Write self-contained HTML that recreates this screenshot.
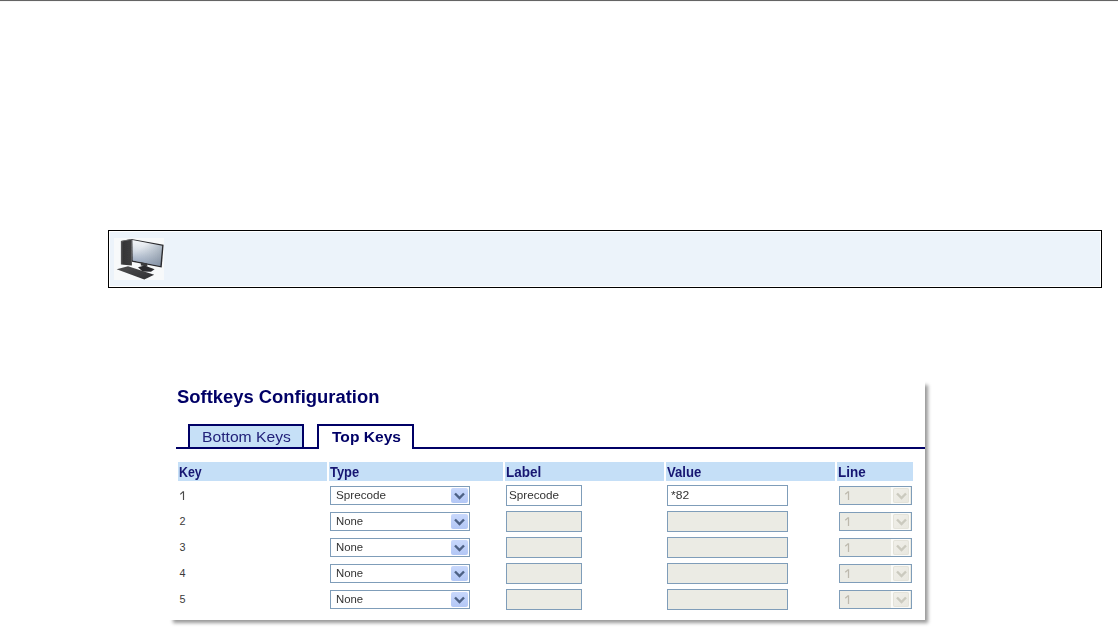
<!DOCTYPE html>
<html><head><meta charset="utf-8">
<style>
*{margin:0;padding:0;box-sizing:border-box}
html,body{width:1118px;height:627px;overflow:hidden;background:#fff;font-family:"Liberation Sans",sans-serif}
.a{position:absolute}
.t{white-space:nowrap;line-height:1;transform-origin:0 0}
#topbar{left:0;top:0;width:1118px;height:1px;background:#646464}
#topbar2{left:0;top:1px;width:1118px;height:1px;background:#f6f6f6}
#topbar3{display:none}
#note{left:108px;top:230px;width:994px;height:58px;border:1px solid #000;background:#ecf3fa;box-shadow:inset 0 0 0 1px #fff}
#panel{left:168px;top:380px;width:757px;height:240px;background:#fff;box-shadow:4px 4px 3.5px -1px rgba(0,0,0,.4)}
.h1{font-weight:bold;color:#000066}
#tabline{left:176px;top:447px;width:749px;height:2px;background:#000066}
.tab{top:424px;height:25px;border:2px solid #000066;border-bottom:none}
#tab1{left:188px;width:116px;background:#c6e0f7}
#tab2{left:317px;width:97px;background:#fff;height:25px}
.tab1t{color:#22227a}
.tab2t{font-weight:bold;color:#000066}
.hd{top:462px;height:19px;background:#c5dff7}
.ht{font-weight:bold;color:#161672}
.num{color:#3a3a3a}
.sel{width:140px;height:19px;border:1px solid #7f9db9;background:#fff}
.btn{width:17px;height:15px;border-radius:2px;background:linear-gradient(#c8d8fc,#b3c7f5)}
.inp{height:21px;border:1px solid #7f9db9;background:#fff}
.dis{background:#ebebe4}
.txt{color:#333}
.lsel{width:73px;height:19px;border:1px solid #7f9db9;background:#ebebe4}
.lgap{width:19px;height:17px;background:#fbfbf8}
.lbtn{width:16px;height:15px;border-radius:2px;background:linear-gradient(135deg,#f1f0ea,#e8e7df);box-shadow:inset 0 0 0 1px #e4e3da}
.lt{color:#aca899}

</style></head><body>
<div class="a" id="topbar"></div><div class="a" id="topbar2"></div><div class="a" id="topbar3"></div>
<div class="a" id="note"></div>
<svg class="a" style="left:114px;top:238px" width="50" height="42" viewBox="0 0 50 42">
  <defs>
    <linearGradient id="scr" x1="0" y1="0" x2="0.9" y2="1"><stop offset="0" stop-color="#fbfcfd"/><stop offset=".3" stop-color="#e9edf1"/><stop offset=".55" stop-color="#b9c3ce"/><stop offset="1" stop-color="#6f7d8e"/></linearGradient>
    <linearGradient id="scr2" x1="0" y1="1" x2="0.6" y2="0"><stop offset="0" stop-color="#7d8fb0" stop-opacity=".85"/><stop offset=".45" stop-color="#a7b5cb" stop-opacity=".35"/><stop offset="1" stop-color="#ffffff" stop-opacity="0"/></linearGradient>
    <linearGradient id="tw" x1="0" y1="0" x2="1" y2="0"><stop offset="0" stop-color="#5a5a5c"/><stop offset=".2" stop-color="#353537"/><stop offset="1" stop-color="#3e3e40"/></linearGradient>
    <linearGradient id="kb" x1="0" y1="0" x2="1" y2="1"><stop offset="0" stop-color="#505052"/><stop offset="1" stop-color="#2e2e30"/></linearGradient>
    <filter id="bl" x="-5%" y="-5%" width="110%" height="110%"><feGaussianBlur stdDeviation="0.5"/></filter>
  </defs>
  <rect x="0" y="0" width="50" height="42" fill="#f7f9fa"/>
  <g filter="url(#bl)">
  <polygon points="6.9,3.0 17.4,1.1 17.9,27.5 6.9,26.4" fill="url(#tw)"/>
  <polygon points="6.9,3.0 17.4,1.1 18.6,1.6 8.2,3.5" fill="#707072"/>
  <polygon points="17.4,1.0 49.6,6.7 47.7,29.5 17.9,23.7" fill="#2a2a2d"/>
  <polygon points="18.4,2.1 48.2,7.7 46.3,28.0 18.8,22.4" fill="url(#scr)"/>
  <polygon points="18.4,2.1 48.2,7.7 46.3,28.0 18.8,22.4" fill="url(#scr2)"/>
  <polygon points="26.8,24.2 33.2,25.5 33.4,28.6 26.8,27.6" fill="#3a3a3c"/>
  <polygon points="24,29.2 30.5,27.6 40.6,31.2 37,33.8 28.5,33.4" fill="#2c2c2e"/>
  <polygon points="2.6,31.2 14,28.2 40.2,36.8 30.3,41.6" fill="url(#kb)"/>
  </g>
</svg>

<div class="a" id="panel"></div>
<div class="a t h1" style="left:176.5px;top:387.0px;font-size:19.2px;transform:scaleX(0.959)">Softkeys Configuration</div>
<div class="a tab" id="tab1"></div>
<div class="a" id="tabline"></div>
<div class="a tab" id="tab2"></div>
<div class="a t tab1t" style="left:201.7px;top:429.0px;font-size:15.4px;transform:scaleX(1.019)">Bottom Keys</div>
<div class="a t tab2t" style="left:331.6px;top:429.0px;font-size:15.4px;transform:scaleX(1.013)">Top Keys</div>
<div class="a hd" style="left:178px;width:149px"></div>
<div class="a hd" style="left:329px;width:174px"></div>
<div class="a hd" style="left:505px;width:159px"></div>
<div class="a hd" style="left:666px;width:169px"></div>
<div class="a hd" style="left:837px;width:76px"></div>
<div class="a t ht" style="left:178.9px;top:465.9px;font-size:13.8px;transform:scaleX(0.9)">Key</div>
<div class="a t ht" style="left:330.4px;top:465.9px;font-size:13.8px;transform:scaleX(0.935)">Type</div>
<div class="a t ht" style="left:505.8px;top:465.9px;font-size:13.8px;transform:scaleX(0.979)">Label</div>
<div class="a t ht" style="left:667.2px;top:465.9px;font-size:13.8px;transform:scaleX(0.953)">Value</div>
<div class="a t ht" style="left:838.0px;top:465.9px;font-size:13.8px;transform:scaleX(0.974)">Line</div>
<svg class="a" style="left:178px;top:489px" width="8" height="13"><path d="M5.5,2.3 V11 M2.3,5.3 L5.2,2.6" fill="none" stroke="#4a4a4a" stroke-width="1.15"/></svg>
<div class="a sel" style="left:330px;top:486px"></div>
<div class="a t txt" style="left:335.6px;top:490.0px;font-size:10.8px;transform:scaleX(1.083)">Sprecode</div>
<div class="a btn" style="left:451px;top:488px"></div>
<svg class="a" style="left:451px;top:488px" width="17" height="15"><polyline points="4,5.5 8.5,10 13,5.5" fill="none" stroke="#4d6185" stroke-width="2.4"/></svg>
<div class="a inp" style="left:506px;top:485px;width:76px"></div>
<div class="a t txt" style="left:508.7px;top:490.0px;font-size:10.8px;transform:scaleX(1.083)">Sprecode</div>
<div class="a inp" style="left:667px;top:485px;width:121px"></div>
<div class="a t txt" style="left:670.6px;top:490.0px;font-size:10.8px;transform:scaleX(1.119)">*82</div>
<div class="a lsel" style="left:839px;top:486px"></div>
<svg class="a" style="left:842.5px;top:489px" width="8" height="13"><path d="M5.5,2.3 V11 M2.3,5.3 L5.2,2.6" fill="none" stroke="#bdb9ad" stroke-width="1.25"/></svg>
<div class="a lgap" style="left:891px;top:487px"></div>
<div class="a lbtn" style="left:893px;top:488px"></div>
<svg class="a" style="left:893px;top:488px" width="17" height="15"><polyline points="4,5.5 8.5,10 13,5.5" fill="none" stroke="#cbcabf" stroke-width="2.4"/></svg>
<div class="a t num" style="left:179.6px;top:516.0px;font-size:10.8px;transform:scaleX(1.0)">2</div>
<div class="a sel" style="left:330px;top:512px"></div>
<div class="a t txt" style="left:336.0px;top:516.0px;font-size:10.8px;transform:scaleX(1.052)">None</div>
<div class="a btn" style="left:451px;top:514px"></div>
<svg class="a" style="left:451px;top:514px" width="17" height="15"><polyline points="4,5.5 8.5,10 13,5.5" fill="none" stroke="#4d6185" stroke-width="2.4"/></svg>
<div class="a inp dis" style="left:506px;top:511px;width:76px"></div>
<div class="a inp dis" style="left:667px;top:511px;width:121px"></div>
<div class="a lsel" style="left:839px;top:512px"></div>
<svg class="a" style="left:842.5px;top:515px" width="8" height="13"><path d="M5.5,2.3 V11 M2.3,5.3 L5.2,2.6" fill="none" stroke="#bdb9ad" stroke-width="1.25"/></svg>
<div class="a lgap" style="left:891px;top:513px"></div>
<div class="a lbtn" style="left:893px;top:514px"></div>
<svg class="a" style="left:893px;top:514px" width="17" height="15"><polyline points="4,5.5 8.5,10 13,5.5" fill="none" stroke="#cbcabf" stroke-width="2.4"/></svg>
<div class="a t num" style="left:179.6px;top:542.0px;font-size:10.8px;transform:scaleX(1.0)">3</div>
<div class="a sel" style="left:330px;top:538px"></div>
<div class="a t txt" style="left:336.0px;top:542.0px;font-size:10.8px;transform:scaleX(1.052)">None</div>
<div class="a btn" style="left:451px;top:540px"></div>
<svg class="a" style="left:451px;top:540px" width="17" height="15"><polyline points="4,5.5 8.5,10 13,5.5" fill="none" stroke="#4d6185" stroke-width="2.4"/></svg>
<div class="a inp dis" style="left:506px;top:537px;width:76px"></div>
<div class="a inp dis" style="left:667px;top:537px;width:121px"></div>
<div class="a lsel" style="left:839px;top:538px"></div>
<svg class="a" style="left:842.5px;top:541px" width="8" height="13"><path d="M5.5,2.3 V11 M2.3,5.3 L5.2,2.6" fill="none" stroke="#bdb9ad" stroke-width="1.25"/></svg>
<div class="a lgap" style="left:891px;top:539px"></div>
<div class="a lbtn" style="left:893px;top:540px"></div>
<svg class="a" style="left:893px;top:540px" width="17" height="15"><polyline points="4,5.5 8.5,10 13,5.5" fill="none" stroke="#cbcabf" stroke-width="2.4"/></svg>
<div class="a t num" style="left:179.6px;top:568.0px;font-size:10.8px;transform:scaleX(1.0)">4</div>
<div class="a sel" style="left:330px;top:564px"></div>
<div class="a t txt" style="left:336.0px;top:568.0px;font-size:10.8px;transform:scaleX(1.052)">None</div>
<div class="a btn" style="left:451px;top:566px"></div>
<svg class="a" style="left:451px;top:566px" width="17" height="15"><polyline points="4,5.5 8.5,10 13,5.5" fill="none" stroke="#4d6185" stroke-width="2.4"/></svg>
<div class="a inp dis" style="left:506px;top:563px;width:76px"></div>
<div class="a inp dis" style="left:667px;top:563px;width:121px"></div>
<div class="a lsel" style="left:839px;top:564px"></div>
<svg class="a" style="left:842.5px;top:567px" width="8" height="13"><path d="M5.5,2.3 V11 M2.3,5.3 L5.2,2.6" fill="none" stroke="#bdb9ad" stroke-width="1.25"/></svg>
<div class="a lgap" style="left:891px;top:565px"></div>
<div class="a lbtn" style="left:893px;top:566px"></div>
<svg class="a" style="left:893px;top:566px" width="17" height="15"><polyline points="4,5.5 8.5,10 13,5.5" fill="none" stroke="#cbcabf" stroke-width="2.4"/></svg>
<div class="a t num" style="left:179.6px;top:594.0px;font-size:10.8px;transform:scaleX(1.0)">5</div>
<div class="a sel" style="left:330px;top:590px"></div>
<div class="a t txt" style="left:336.0px;top:594.0px;font-size:10.8px;transform:scaleX(1.052)">None</div>
<div class="a btn" style="left:451px;top:592px"></div>
<svg class="a" style="left:451px;top:592px" width="17" height="15"><polyline points="4,5.5 8.5,10 13,5.5" fill="none" stroke="#4d6185" stroke-width="2.4"/></svg>
<div class="a inp dis" style="left:506px;top:589px;width:76px"></div>
<div class="a inp dis" style="left:667px;top:589px;width:121px"></div>
<div class="a lsel" style="left:839px;top:590px"></div>
<svg class="a" style="left:842.5px;top:593px" width="8" height="13"><path d="M5.5,2.3 V11 M2.3,5.3 L5.2,2.6" fill="none" stroke="#bdb9ad" stroke-width="1.25"/></svg>
<div class="a lgap" style="left:891px;top:591px"></div>
<div class="a lbtn" style="left:893px;top:592px"></div>
<svg class="a" style="left:893px;top:592px" width="17" height="15"><polyline points="4,5.5 8.5,10 13,5.5" fill="none" stroke="#cbcabf" stroke-width="2.4"/></svg>

</body></html>
